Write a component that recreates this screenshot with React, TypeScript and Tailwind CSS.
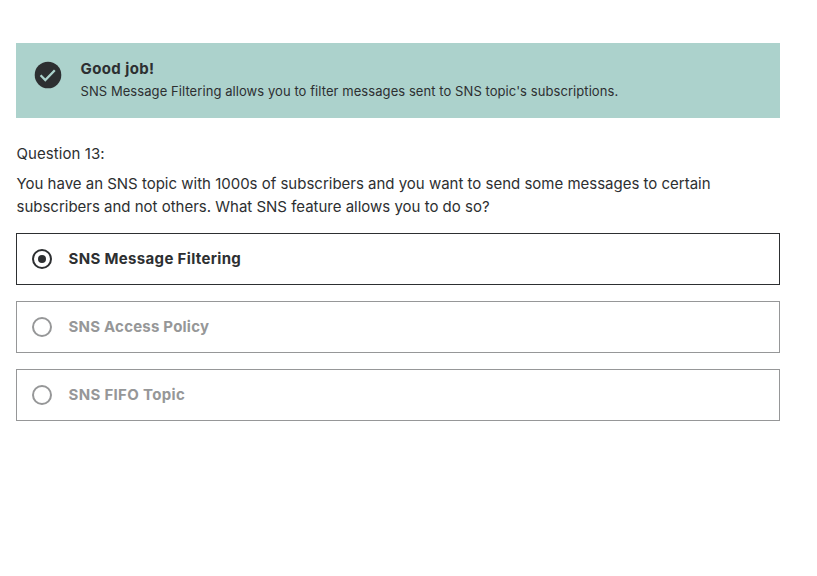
import React from "react";

const options = [
  { label: "SNS Message Filtering", selected: true, tracking: "tracking-[0.34px]" },
  { label: "SNS Access Policy", selected: false, tracking: "tracking-[0.22px]" },
  { label: "SNS FIFO Topic", selected: false, tracking: "tracking-[0.33px]" },
];

export default function App() {
  return (
    <main className="min-h-screen bg-white pt-[43px] pl-4 pr-[37px] font-['Inter',sans-serif] text-[#2d2f31]">
      <section className="flex h-[75px] items-start bg-[#acd2cc] pl-[18px] pt-[18px]">
        <svg width="28" height="28" viewBox="0 0 28 28" className="shrink-0">
          <circle cx="14" cy="14" r="13.3" fill="#2d2f31" />
          <path d="M6.6 14.2l4.7 4.8 9.5-9.7" fill="none" stroke="#acd2cc" strokeWidth="2.3" />
        </svg>
        <div className="-mt-[3px] ml-[18.5px]">
          <h2 className="text-[15px] leading-[22px] font-bold tracking-[0.4px]">Good job!</h2>
          <p className="text-[13px] leading-[22px] tracking-[0.07px] whitespace-nowrap">SNS Message Filtering allows you to filter messages sent to SNS topic's subscriptions.</p>
        </div>
      </section>
      <div className="mt-6 pl-[0.5px] text-[15px] leading-[23px] tracking-[0.08px]">Question 13:</div>
      <div className="mt-[7px] pl-[0.5px] text-[15px] leading-[23px] tracking-[-0.007px] whitespace-nowrap">
        <p>You have an SNS topic with 1000s of subscribers and you want to send some messages to certain</p>
        <p>subscribers and not others. What SNS feature allows you to do so?</p>
      </div>
      <ul className="mt-[15px] flex flex-col gap-4">
        {options.map((o) => (
          <li key={o.label} className={`flex h-[52px] items-center border pl-[15px] ${o.selected ? "border-[#2d2f31]" : "border-[#969798] text-[#969798]"}`}>
            <svg width="20" height="20" viewBox="0 0 20 20" className="shrink-0">
              <circle cx="10" cy="10" r="9" fill="none" stroke="currentColor" strokeWidth="2" />
              {o.selected && <circle cx="10" cy="10" r="4" fill="currentColor" />}
            </svg>
            <span className={`ml-[16.5px] text-[15px] font-bold ${o.tracking}`}>{o.label}</span>
          </li>
        ))}
      </ul>
    </main>
  );
}
